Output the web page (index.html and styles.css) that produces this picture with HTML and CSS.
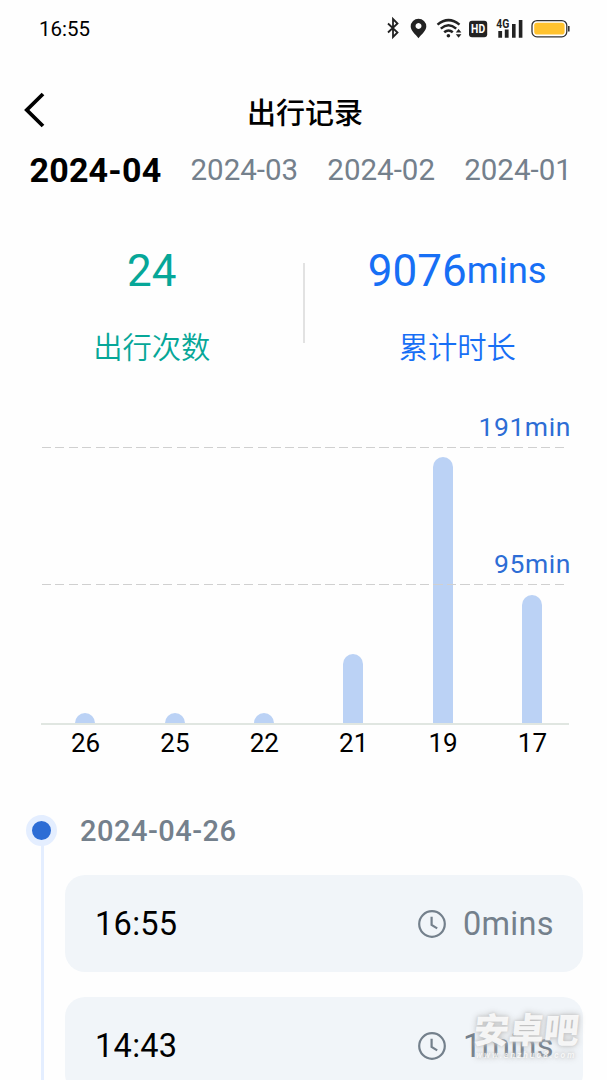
FILE: index.html
```html
<!DOCTYPE html>
<html lang="zh-CN">
<head>
  <meta charset="UTF-8" />
  <title>出行记录</title>
  <link rel="stylesheet" href="styles.css">
</head>
<body>

  <div class="status-bar">
    <span class="clock">16:55</span>
    <svg class="status-icons" width="190" height="30" viewBox="0 0 190 30">
      <!-- bluetooth -->
      <path d="M3 9.5 L12.5 18.5 L8 23 V5 L12.5 9.5 L3 18.5" fill="none" stroke="#222" stroke-width="1.8"/>
      <!-- location -->
      <path fill-rule="evenodd" fill="#222" d="M33.5 4.8 a7.8 7.8 0 0 1 7.8 7.8 c0 4.3 -4.8 8 -7.8 11.6 c-3 -3.6 -7.8 -7.3 -7.8 -11.6 a7.8 7.8 0 0 1 7.8 -7.8 z M33.5 9 a3 3 0 1 0 0.01 0 z"/>
      <!-- wifi -->
      <g fill="none" stroke="#222" stroke-width="2.5">
        <path d="M52.5 10.6 Q63.5 1.6 74.5 10.6"/>
        <path d="M55.8 14.6 Q63.5 8 71.2 14.6"/>
        <path d="M59.2 18.3 Q63.5 14.6 67.8 18.3"/>
      </g>
      <circle cx="63.4" cy="21.8" r="1.8" fill="#222"/>
      <path d="M70.8 18.6 l2.8 -3.6 l2.8 3.6 z M70.8 20.2 l2.8 3.6 l2.8 -3.6 z" fill="#222"/>
      <!-- hd -->
      <rect x="84" y="6.8" width="18.2" height="16.4" rx="3" fill="#222"/>
      <text x="93.1" y="19" class="hd" textLength="14" lengthAdjust="spacingAndGlyphs">HD</text>
      <!-- signal -->
      <text x="111.3" y="13.8" class="net" textLength="13" lengthAdjust="spacingAndGlyphs">4G</text>
      <path d="M113.3 17h3.8v6.8h-3.8z M119.8 15.4h3.8v8.4h-3.8z M127 10h3.6v13.8h-3.6z M133.8 6h3.6v17.8h-3.6z" fill="#222"/>
      <!-- battery -->
      <rect x="147" y="6.6" width="34.8" height="16.2" rx="5" fill="none" stroke="#333" stroke-width="1.3"/>
      <rect x="149.2" y="8.8" width="30.4" height="11.8" rx="2.8" fill="#ffc22e"/>
      <path d="M183.8 12v5.6" stroke="#333" stroke-width="1.6"/>
    </svg>
  </div>

  <div class="header">
    <svg class="back" width="24" height="36" viewBox="0 0 24 36">
      <path d="M21 2 L4.8 18 L21 34" fill="none" stroke="#000" stroke-width="3.8"/>
    </svg>
    <div class="title">出行记录</div>
  </div>

  <div class="months">
    <span class="active">2024-04</span>
    <span>2024-03</span>
    <span>2024-02</span>
    <span>2024-01</span>
  </div>

  <div class="summary">
    <div class="stat trips">
      <div class="num">24</div>
      <div class="label">出行次数</div>
    </div>
    <div class="divider"></div>
    <div class="stat total">
      <div class="num">9076<small>mins</small></div>
      <div class="label">累计时长</div>
    </div>
  </div>

  <div class="chart">
    <div class="plot">
      <div class="bar" style="height: 10px"></div>
      <div class="bar" style="height: 10px"></div>
      <div class="bar" style="height: 10px"></div>
      <div class="bar" style="height: 69.5px"></div>
      <div class="bar" style="height: 266.5px"></div>
      <div class="bar" style="height: 128px"></div>
      <div class="grid top"><span>191min</span></div>
      <div class="grid mid"><span>95min</span></div>
    </div>
    <div class="days">
      <span>26</span><span>25</span><span>22</span><span>21</span><span>19</span><span>17</span>
    </div>
  </div>

  <div class="timeline">
    <div class="rail"><div class="dot"></div></div>
    <div class="records">
      <div class="date">2024-04-26</div>
      <div class="card">
        <span class="time">16:55</span>
        <svg width="28" height="28" viewBox="0 0 28 28"><circle cx="14" cy="14" r="12.8"/><path d="M13.6 6.8 V15 L19.2 18.4"/></svg>
        <span class="mins">0mins</span>
      </div>
      <div class="card">
        <span class="time">14:43</span>
        <svg width="28" height="28" viewBox="0 0 28 28"><circle cx="14" cy="14" r="12.8"/><path d="M13.6 6.8 V15 L19.2 18.4"/></svg>
        <span class="mins">1mins</span>
      </div>
    </div>
  </div>

  <div class="watermark">
    <div class="name">安卓吧</div>
    <div class="url">www.anzhuo8.com</div>
  </div>

</body>
</html>
```
FILE: styles.css
```css
* { box-sizing: border-box; }
body {
  margin: 0; height: 1080px; overflow: hidden; position: relative;
  background: #fefefe; color: #000;
  font-family: Roboto, "Noto Sans CJK SC", sans-serif;
}

.status-bar {
  display: flex; justify-content: space-between; align-items: center;
  height: 58px; padding: 0 32px 0 39px;
}
.clock { font-size: 20.5px; }
.status-icons { width: 190px; margin-right: 0; }
.hd { font-size: 12px; font-weight: bold; fill: white; text-anchor: middle; }
.net { font-size: 12px; font-weight: bold; fill: #222; }

.header { display: flex; align-items: center; height: 84px; padding: 20px 22px 0; }
.title { flex: 1; padding: 2px 21px 0 0; text-align: center; font-size: 29px; font-weight: 500; }

.months {
  display: flex; align-items: center; gap: 29.2px;
  height: 56px; padding-left: 29.5px;
  font-size: 29.5px; color: #74808c; white-space: nowrap;
}
.months .active { font-size: 34px; font-weight: bold; letter-spacing: 0.2px; color: #000; }

.summary { display: flex; height: 182px; padding-top: 42px; }
.stat { width: 304px; text-align: center; }
.trips { color: #06a798; }
.total { padding-left: 4px; color: #176ff5; }
.num {
  display: flex; justify-content: center; align-items: center;
  height: 60px; padding-top: 1px; font-size: 44px;
}
.num small { font-size: 36.5px; }
.label { margin-top: 26px; font-size: 29.3px; font-weight: 350; line-height: 44px; }
.divider { width: 2px; height: 80px; margin: 23px -1px 0; background: #e2e2e2; }

.chart { width: 528px; margin-left: 41px; padding-top: 67px; }
.plot {
  display: flex; justify-content: space-between; align-items: flex-end;
  position: relative; height: 278px; padding: 0 26.8px 0 34.2px;
  border-bottom: 2px solid #e0e6e1;
}
.bar { width: 20px; border-radius: 10px 10px 0 0; background: #bbd2f5; }
.grid {
  position: absolute; left: 1px; width: 525px; height: 1px;
  background: repeating-linear-gradient(90deg, #d0d0d0 0 9px, transparent 9px 13.5px);
}
.grid.top { top: 0; }
.grid.mid { top: 137px; }
.grid span {
  position: absolute; right: -4px; bottom: 6px;
  font-size: 26.5px; letter-spacing: 0.6px; color: #2d6dd5;
}
.days {
  display: flex; justify-content: space-between;
  padding: 1px 20px 0 28px; font-size: 26px; line-height: 34px;
}
.days span { width: 33px; text-align: center; }

.timeline { display: flex; margin-top: 55px; height: 300px; }
.rail {
  width: 3px; margin-left: 41px; background: #e4eeff;
}
.dot {
  width: 31px; height: 31px; margin-left: -15px;
  border: 6px solid #e4eeff; border-radius: 50%; background: #2d6dd5;
}
.records { margin-left: 21px; width: 518px; }
.date {
  height: 60px; padding-left: 15px; line-height: 33px;
  font-size: 29px; font-weight: 500; letter-spacing: 0.5px; color: #74808c;
}
.card {
  display: flex; align-items: center; height: 97px; margin-bottom: 25px;
  padding: 0 30px; border-radius: 20px; background: #f1f5f9;
  font-size: 32.5px; letter-spacing: 0.3px;
}
.time { flex: 1; }
.card svg { fill: none; stroke: #74808c; stroke-width: 2.2; }
.mins { width: 91px; margin-left: 16px; padding-left: 1px; color: #74808c; }

.watermark {
  position: absolute; left: 474px; top: 1013px; width: 110px;
  color: rgba(255, 255, 255, 0.85); white-space: nowrap;
  text-shadow: 0 0 7px #bbb, 0 0 3px #ccc;
}
.name { font-size: 35px; font-weight: 900; line-height: 38px; transform: skewX(-6deg); }
.url {
  padding-left: 2px; color: rgba(255, 255, 255, 0.75);
  font-size: 8.5px; font-weight: bold; font-style: italic; line-height: 9px; letter-spacing: 2px;
}
```
